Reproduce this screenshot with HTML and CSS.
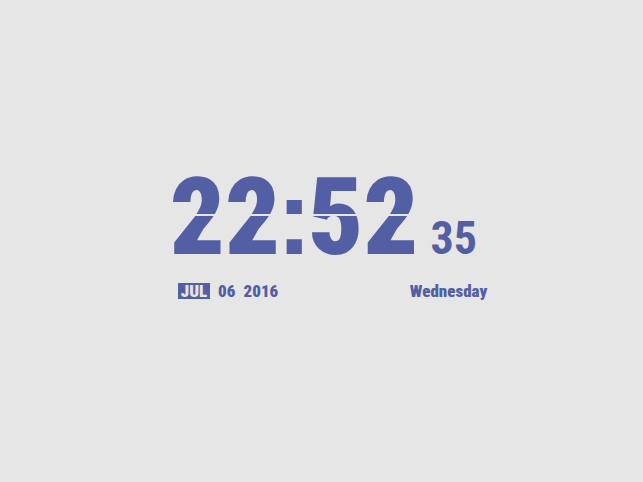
FILE: index.html
```html
<!DOCTYPE html>
<html lang="en">
<head>
    <meta charset="UTF-8">
    <meta name="viewport" content="width=device-width, initial-scale=1.0">
    <title>Clock</title>
    <link rel="stylesheet" href="styles.css">
</head>
<body>

<main class="clock">
    <time class="time" datetime="22:52:35">
        <span class="hours-minutes">22<span class="colon">:</span>52</span>
        <span class="seconds">35</span>
    </time>
    <time class="date" datetime="2016-07-06">
        <span class="month">JUL</span>
        <span class="day">06</span>
        <span class="year">2016</span>
        <span class="weekday">Wednesday</span>
    </time>
</main>

</body>
</html>
```

FILE: styles.css
```css
body {
    margin: 0;
    padding-bottom: 20px;
    box-sizing: border-box;
    min-height: 100vh;
    display: flex;
    justify-content: center;
    align-items: center;
    background-color: #e6e6e6;
    color: #535fa4;
    font-family: "Roboto Condensed", "Liberation Sans", sans-serif;
    font-weight: 900;
}
.clock {
    width: 50%;
    min-width: 320px;
    padding-left: 18px;
}
.time {
    display: flex;
    align-items: baseline;
    gap: 12px;
    line-height: 1;
}
.hours-minutes {
    position: relative;
    font-size: 108px;
}
/* split line across the digits */
.hours-minutes::after {
    content: "";
    position: absolute;
    left: 0;
    right: 0;
    top: 47%;
    height: 2px;
    background-color: #e6e6e6;
}
/* square dots */
.colon {
    margin: 0 -4px;
    font-family: "Liberation Sans", Arial, sans-serif;
}
.seconds {
    font-size: 46px;
    font-weight: bold;
}
.date {
    display: flex;
    align-items: center;
    margin-top: 12px;
    padding: 0 4px 0 8px;
    font-size: 17px;
    line-height: 16px;
}
.month {
    padding: 0 3px;
    background-color: #535fa4;
    color: #e6e6e6;
}
.day {
    margin-left: 8px;
}
.year {
    margin-left: 8px;
}
.weekday {
    margin-left: auto;
}
```
